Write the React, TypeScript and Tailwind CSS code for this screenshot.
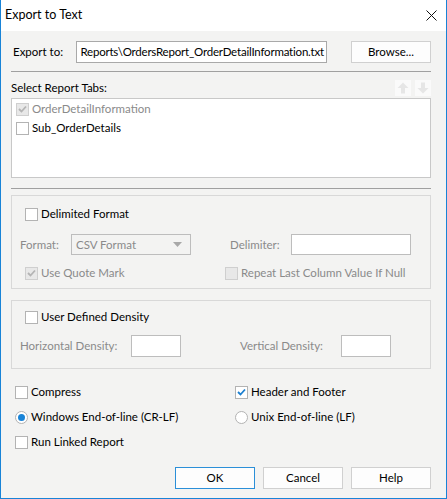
import React from "react";

function Box({
  checked = false,
  disabled = false,
}: {
  checked?: boolean;
  disabled?: boolean;
}) {
  return (
    <span
      className={`w-[13px] h-[13px] shrink-0 border flex items-center justify-center ${
        disabled ? "bg-[#e8e8e8] border-[#cfcfcf]" : "bg-white border-[#b3b3b3]"
      }`}
    >
      {checked && (
        <svg width="9" height="8" viewBox="0 0 9 8">
          <path
            d="M1 4 L3.5 6.5 L8 1.5"
            fill="none"
            stroke={disabled ? "#b4b4b4" : "#1b7fd0"}
            strokeWidth="1.8"
          />
        </svg>
      )}
    </span>
  );
}

function Check({
  label,
  checked,
  disabled,
  className = "",
}: {
  label: string;
  checked?: boolean;
  disabled?: boolean;
  className?: string;
}) {
  return (
    <div className={`flex items-center gap-[3px] h-[16px] ${className}`}>
      <Box checked={checked} disabled={disabled} />
      <span className={disabled ? "text-[#8a8a8a]" : "text-black"}>{label}</span>
    </div>
  );
}

function Radio({ label, on, className = "" }: { label: string; on?: boolean; className?: string }) {
  return (
    <div className={`flex items-center gap-[3px] h-[16px] ${className}`}>
      <span className="w-[13px] h-[13px] rounded-full border border-[#b3b3b3] bg-white flex items-center justify-center shrink-0">
        {on && <span className="w-[7px] h-[7px] rounded-full bg-[#1883d7]" />}
      </span>
      <span>{label}</span>
    </div>
  );
}

function Button({ label, primary }: { label: string; primary?: boolean }) {
  return (
    <div
      className={`w-[80px] h-[22px] bg-[#fdfdfd] border flex items-center justify-center ${
        primary ? "border-[#2b8fd8]" : "border-[#d0d0d0]"
      }`}
    >
      {label}
    </div>
  );
}

export default function App() {
  return (
    <div className="w-[447px] h-[499px] flex flex-col border-x border-b border-[#1883d7] bg-[#f3f3f2] text-[11.5px] leading-none text-black font-['Lato',sans-serif] overflow-hidden">
      {/* Title bar */}
      <div className="h-[31px] bg-white flex items-center justify-between pl-[4px] pr-[9px] shrink-0">
        <span className="text-[12.5px]">Export to Text</span>
        <svg width="11" height="11" viewBox="0 0 11 11">
          <path d="M0.5 0.5 L10.5 10.5 M10.5 0.5 L0.5 10.5" stroke="#111" strokeWidth="1" />
        </svg>
      </div>

      <div className="flex flex-col pl-[10px] pr-[15px]">
        {/* Export to row */}
        <div className="flex items-center mt-[10px] h-[22px]">
          <span className="w-[65px] pl-[2px] shrink-0">Export to:</span>
          <div className="w-[251px] h-[22px] shrink-0 border border-[#a9a9a9] bg-white flex items-center justify-end overflow-hidden pr-[2px] whitespace-nowrap tracking-[-0.2px]">
            Reports\OrdersReport_OrderDetailInformation.txt
          </div>
          <div className="ml-auto">
            <Button label="Browse..." />
          </div>
        </div>

        <div className="h-px bg-[#a0a0a0] mt-[8px]" />

        {/* Select report tabs */}
        <div className="flex items-center justify-between h-[16px] mt-[8px]">
          <span>Select Report Tabs:</span>
          <div className="flex gap-[4px]">
            <div className="w-[16px] h-[16px] bg-[#fafafa] flex items-center justify-center">
              <svg width="12" height="12" viewBox="0 0 12 12">
                <path d="M6 0.5 L11.5 6 L8 6 L8 11.5 L4 11.5 L4 6 L0.5 6 Z" fill="#e6e6e6" />
              </svg>
            </div>
            <div className="w-[16px] h-[16px] bg-[#fafafa] flex items-center justify-center">
              <svg width="12" height="12" viewBox="0 0 12 12">
                <path d="M6 11.5 L11.5 6 L8 6 L8 0.5 L4 0.5 L4 6 L0.5 6 Z" fill="#e6e6e6" />
              </svg>
            </div>
          </div>
        </div>
        <div className="h-[80px] mt-[2px] border border-[#c8c8c8] bg-white flex flex-col pl-[4px] pt-[2px] gap-[3px]">
          <Check label="OrderDetailInformation" checked disabled />
          <Check label="Sub_OrderDetails" />
        </div>

        <div className="h-px bg-[#a0a0a0] mt-[10px]" />

        {/* Delimited format group */}
        <div className="h-[94px] mt-[6px] border border-[#d8d8d8] flex flex-col">
          <Check label="Delimited Format" className="mt-[10px] ml-[13px]" />
          <div className="flex items-center mt-[12px] h-[21px] text-[#8a8a8a]">
            <span className="w-[51px] ml-[8px]">Format:</span>
            <div className="w-[120px] h-[21px] border border-[#bdbdbd] flex items-center justify-between pl-[4px] pr-[8px]">
              <span>CSV Format</span>
              <svg width="9" height="5" viewBox="0 0 9 5">
                <path d="M0 0 L9 0 L4.5 5 Z" fill="#a8a8a8" />
              </svg>
            </div>
            <span className="w-[61px] ml-[39px]">Delimiter:</span>
            <div className="w-[120px] h-[21px] border border-[#bdbdbd] bg-white" />
          </div>
          <div className="flex items-center mt-[10px]">
            <Check label="Use Quote Mark" checked disabled className="ml-[13px] w-[200px]" />
            <Check label="Repeat Last Column Value If Null" disabled />
          </div>
        </div>

        {/* Density group */}
        <div className="h-[69px] mt-[11px] border border-[#d8d8d8] flex flex-col">
          <Check label="User Defined Density" className="mt-[8px] ml-[13px]" />
          <div className="flex items-center mt-[10px] h-[22px] text-[#8a8a8a]">
            <span className="w-[111px] ml-[8px]">Horizontal Density:</span>
            <div className="w-[50px] h-[22px] border border-[#bdbdbd] bg-white" />
            <span className="w-[101px] ml-[59px]">Vertical Density:</span>
            <div className="w-[50px] h-[22px] border border-[#bdbdbd] bg-white" />
          </div>
        </div>

        {/* Options */}
        <div className="flex flex-col mt-[15px] gap-[9px] pl-[4px]">
          <div className="flex items-center">
            <Check label="Compress" className="w-[220px]" />
            <Check label="Header and Footer" checked />
          </div>
          <div className="flex items-center">
            <Radio label="Windows End-of-line (CR-LF)" on className="w-[220px]" />
            <Radio label="Unix End-of-line (LF)" />
          </div>
          <Check label="Run Linked Report" />
        </div>

        {/* Buttons */}
        <div className="flex justify-end gap-[8px] mt-[17px]">
          <Button label="OK" primary />
          <Button label="Cancel" />
          <Button label="Help" />
        </div>
      </div>
    </div>
  );
}
